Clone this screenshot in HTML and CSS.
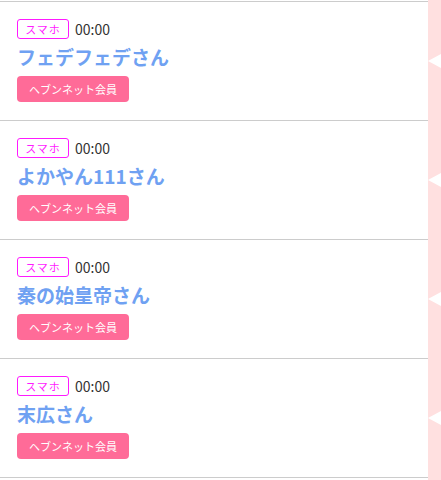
FILE: index.html
```html
<!DOCTYPE html>
<html lang="ja">

<head>
    <meta charset="UTF-8">
    <meta name="viewport" content="width=device-width, initial-scale=1.0">
    <title>待機リスト</title>
    <link rel="stylesheet" href="styles.css">
</head>

<body>
    <ul class="list">
        <li class="row">
            <div class="item">
                <div class="meta"><span class="device">スマホ</span><span class="time">00:00</span></div>
                <div class="name">フェデフェデさん</div>
                <span class="member">ヘブンネット会員</span>
            </div>
            <div class="side"></div>
        </li>
        <li class="row">
            <div class="item">
                <div class="meta"><span class="device">スマホ</span><span class="time">00:00</span></div>
                <div class="name">よかやん111さん</div>
                <span class="member">ヘブンネット会員</span>
            </div>
            <div class="side"></div>
        </li>
        <li class="row">
            <div class="item">
                <div class="meta"><span class="device">スマホ</span><span class="time">00:00</span></div>
                <div class="name">秦の始皇帝さん</div>
                <span class="member">ヘブンネット会員</span>
            </div>
            <div class="side"></div>
        </li>
        <li class="row">
            <div class="item">
                <div class="meta"><span class="device">スマホ</span><span class="time">00:00</span></div>
                <div class="name">末広さん</div>
                <span class="member">ヘブンネット会員</span>
            </div>
            <div class="side"></div>
        </li>
        <li class="row end">
            <div class="item"></div>
        </li>
    </ul>
</body>

</html>
```

FILE: styles.css
```css
html, body {
    margin: 0;
    padding: 0;
}

body {
    font-family: "Noto Sans CJK JP", "Noto Sans", sans-serif;
    background: linear-gradient(to right, #fff 428px, #ffe0e0 428px);
    height: 480px;
    overflow: hidden;
}

.list {
    list-style: none;
    margin: 0;
    padding: 1px 0 0 0;
}

.row {
    display: flex;
}

.item {
    width: 428px;
    height: 119px;
    box-sizing: border-box;
    border-top: 1px solid #cccccc;
    padding: 17px 0 0 17px;
}

.end .item {
    height: 2px;
    padding: 0;
}

.side {
    flex: 1;
    background: #ffe0e0;
    position: relative;
}

/* pointer on the pink column */
.side::after {
    content: "";
    position: absolute;
    left: 0;
    top: 53px;
    border-style: solid;
    border-width: 7px 13px 7px 0;
    border-color: transparent #fff transparent transparent;
}

.meta {
    display: flex;
    align-items: center;
    height: 20px;
}

.device {
    display: inline-flex;
    align-items: center;
    justify-content: center;
    box-sizing: border-box;
    width: 52px;
    height: 20px;
    border: 1px solid #ff1aff;
    border-radius: 3px;
    color: #ff1aff;
    font-size: 11px;
    letter-spacing: 1px;
}

.time {
    margin-left: 6px;
    font-size: 14px;
    color: #333;
}

.name {
    margin-top: 5px;
    height: 26px;
    line-height: 26px;
    font-size: 19px;
    font-weight: bold;
    color: #6fa1f2;
}

.member {
    display: inline-flex;
    align-items: center;
    justify-content: center;
    margin-top: 6px;
    width: 112px;
    height: 26px;
    border-radius: 4px;
    background: #ff6b98;
    color: #fff;
    font-size: 11px;
}
```
